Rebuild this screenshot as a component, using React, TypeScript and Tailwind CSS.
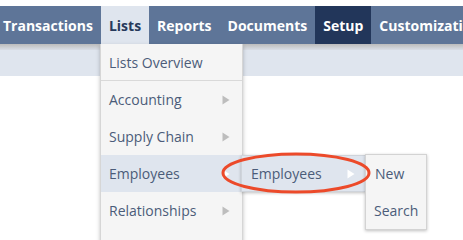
import React from "react";

function Arrow({ color }: { color: string }) {
  return (
    <svg width="8" height="10" viewBox="0 0 8 10" className="shrink-0">
      <path d="M0.5 0.5 L7.5 5 L0.5 9.5 Z" fill={color} />
    </svg>
  );
}

export default function App() {
  const font = { fontFamily: '"Open Sans", "Noto Sans", sans-serif' };
  return (
    <div className="relative w-[463px] h-[240px] bg-white overflow-hidden" style={font}>
      <div className="h-[6px] bg-white" />
      <nav className="flex h-[38px] bg-[#5e7598] text-white font-bold text-[14px] whitespace-nowrap">
        <div className="flex items-center px-2 ml-[-5px]">Transactions</div>
        <div className="flex items-center px-2 bg-[#dfe5ee] text-[#26395b]">Lists</div>
        <div className="flex items-center px-2">Reports</div>
        <div className="flex items-center px-2">Documents</div>
        <div className="flex items-center px-2 bg-[#22365a]">Setup</div>
        <div className="flex items-center px-2">Customization</div>
      </nav>
      <div className="h-[6px] bg-gradient-to-b from-[#bcbcbc] to-[#d9dee7]" />
      <div className="h-[26px] bg-[#dfe5ee]" />

      <div className="absolute left-[100px] top-[44px] w-[143px] h-[200px] bg-[#f5f5f5] border-l border-r border-[#d6d6d6] shadow-[0_2px_4px_rgba(0,0,0,0.25)] text-[14px] text-[#4b5c79]">
        <div className="h-[36px] flex items-center pl-[8px]">Lists Overview</div>
        <div className="h-px bg-[#d9d9d9]" />
        <div className="h-[37px] flex items-center justify-between pl-[8px] pr-[12px]">
          <span>Accounting</span>
          <Arrow color="#bdbdbd" />
        </div>
        <div className="h-[37px] flex items-center justify-between pl-[8px] pr-[12px]">
          <span>Supply Chain</span>
          <Arrow color="#bdbdbd" />
        </div>
        <div className="h-[37px] flex items-center justify-between pl-[8px] pr-[12px] bg-[#dfe5ee]">
          <span>Employees</span>
          <Arrow color="#ffffff" />
        </div>
        <div className="h-[37px] flex items-center justify-between pl-[8px] pr-[12px]">
          <span>Relationships</span>
          <Arrow color="#bdbdbd" />
        </div>
      </div>

      <div className="absolute left-[241px] top-[155px] w-[125px] h-[37px] flex items-center justify-between pl-[9px] pr-[10px] bg-[#dfe5ee] border border-[#cfd4db] shadow-[0_1px_3px_rgba(0,0,0,0.25)] text-[14px] text-[#4b5c79]">
        <span>Employees</span>
        <Arrow color="#ffffff" />
      </div>

      <div className="absolute left-[365px] top-[154px] w-[62px] h-[76px] bg-[#f5f5f5] border border-[#d3d3d3] shadow-[0_1px_3px_rgba(0,0,0,0.25)] text-[14px] text-[#4b5c79]">
        <div className="h-[37px] flex items-center pl-[9px]">New</div>
        <div className="h-[37px] flex items-center pl-[8px]">Search</div>
      </div>

      <svg className="absolute left-0 top-0 pointer-events-none" width="463" height="240" viewBox="0 0 463 240">
        <ellipse cx="296" cy="173" rx="73" ry="19" fill="none" stroke="#ec4a2a" strokeWidth="3" />
      </svg>
    </div>
  );
}
